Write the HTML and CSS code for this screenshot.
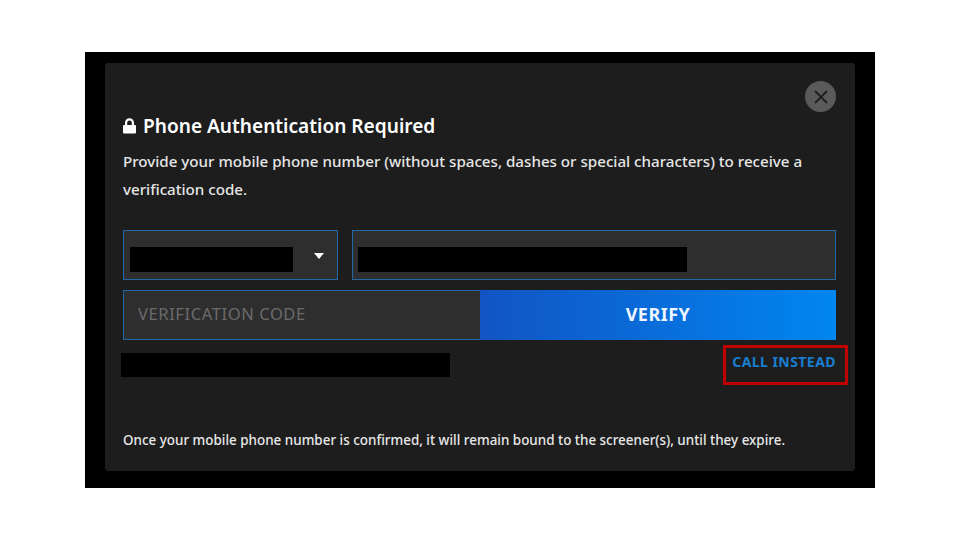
FILE: index.html
```html
<!DOCTYPE html>
<html lang="en">
<head>
  <meta charset="UTF-8">
  <title>Phone Authentication Required</title>
  <link rel="stylesheet" href="styles.css">
</head>
<body>

<div class="backdrop">
  <div class="modal">

    <div class="close-row">
      <button class="close" type="button" aria-label="Close">
        <svg width="14" height="14" viewBox="0 0 14 14"><path d="M1 1l12 12M13 1L1 13" stroke="#1e1e1e" stroke-width="1.800" fill="none"/></svg>
      </button>
    </div>

    <h2 class="title">
      <svg class="lock" width="13" height="16" viewBox="0 0 13 16"><path d="M2 7V4.700a4.500 4.500 0 0 1 9 0V7h1a1 1 0 0 1 1 1v6.500a1 1 0 0 1-1 1H1a1 1 0 0 1-1-1V8a1 1 0 0 1 1-1zm2.200 0h4.600V4.700a2.300 2.300 0 0 0-4.600 0z" fill="#fff"/></svg>
      Phone Authentication Required
    </h2>
    <p class="intro">Provide your mobile phone number (without spaces, dashes or special characters) to receive a verification code.</p>

    <div class="phone-row">
      <div class="field country">
        <span class="redacted country-bar"></span>
        <span class="caret"></span>
      </div>
      <div class="field number">
        <span class="redacted number-bar"></span>
      </div>
    </div>

    <div class="verify-row">
      <div class="field code">VERIFICATION CODE</div>
      <button class="verify" type="button">VERIFY</button>
    </div>

    <div class="status-row">
      <span class="redacted status-bar"></span>
      <a class="call" href="#">CALL INSTEAD</a>
      <span class="highlight"></span>
    </div>

    <p class="note">Once your mobile phone number is confirmed, it will remain bound to the screener(s), until they expire.</p>

  </div>
</div>

</body>
</html>
```

FILE: styles.css
```css
body {
  margin: 0;
  background: #fff;
  padding: 52px 85px;
  font-family: "Noto Sans", "Open Sans", sans-serif;
}
.backdrop {
  background: #000;
  height: 436px;
  padding: 11px 20px 17px;
  box-sizing: border-box;
}
.modal {
  background: #1d1d1d;
  height: 408px;
  border-radius: 3px;
  padding: 18px 19px 0 18px;
  box-sizing: border-box;
}
.close-row {
  display: flex;
  justify-content: flex-end;
}
.close {
  width: 31px;
  height: 31px;
  border: 0;
  border-radius: 50%;
  padding: 0;
  background: #5a5a5a;
  display: flex;
  align-items: center;
  justify-content: center;
}
.title {
  margin: 1px 0 0;
  color: #fff;
  font-size: 19.100px;
  line-height: 26px;
  font-weight: 600;
  display: flex;
  align-items: center;
  gap: 7px;
}
.intro {
  margin: 8px 0 0;
  width: 700px;
  color: #e6e6e6;
  font-size: 15.150px;
  font-weight: 500;
  line-height: 28px;
}
.phone-row {
  display: flex;
  gap: 14px;
  margin-top: 27px;
}
.field {
  box-sizing: border-box;
  height: 50px;
  background: #2e2e2e;
  border: 1px solid #2268a6;
  display: flex;
  align-items: center;
}
.country {
  width: 215px;
  padding-left: 6px;
}
.number {
  flex: 1;
  padding-left: 5px;
}
.redacted {
  display: block;
  background: #000;
  height: 25px;
}
.country-bar {
  width: 163px;
  margin-top: 8px;
}
.number-bar {
  width: 329px;
  margin-top: 8px;
}
.caret {
  margin-left: 21px;
  margin-top: 2px;
  border-left: 5px solid transparent;
  border-right: 5px solid transparent;
  border-top: 6px solid #fff;
}
.verify-row {
  display: flex;
  margin-top: 10px;
}
.code {
  width: 357px;
  padding: 0 0 3px 14px;
  color: #6b6b6b;
  font-size: 16.500px;
  letter-spacing: 0.6px;
  border-right: 0;
}
.verify {
  flex: 1;
  height: 50px;
  border: 0;
  padding: 0 0 2px;
  background: linear-gradient(90deg, #1254c4, #0086f0);
  color: #eef6ff;
  font-family: inherit;
  font-size: 18px;
  font-weight: 700;
  letter-spacing: 0.5px;
}
.status-row {
  position: relative;
  display: flex;
  justify-content: space-between;
  margin: 13px 0 0 -2px;
}
.status-bar {
  width: 329px;
  height: 24px;
}
.call {
  color: #1a7ed0;
  font-size: 14px;
  font-weight: 700;
  letter-spacing: 0.45px;
  line-height: 17px;
  text-decoration: none;
}
.highlight {
  position: absolute;
  right: -12px;
  top: -8px;
  width: 119px;
  height: 34px;
  border: 3px solid #c00000;
}
.note {
  margin: 53px 0 0;
  color: #e8e8e8;
  font-size: 13.430px;
  font-weight: 500;
  line-height: 20px;
}
```
